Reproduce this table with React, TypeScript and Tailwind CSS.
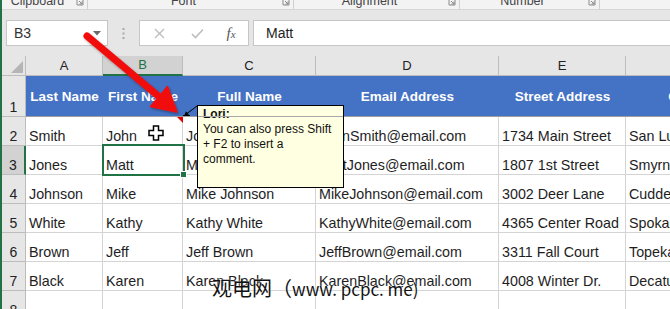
import React from "react";

const rows: string[][] = [
  ["Smith", "John", "John Smith", "JohnSmith@email.com", "1734 Main Street", "San Luis Obispo"],
  ["Jones", "Matt", "Matt Jones", "MattJones@email.com", "1807 1st Street", "Smyrna"],
  ["Johnson", "Mike", "Mike Johnson", "MikeJohnson@email.com", "3002 Deer Lane", "Cuddebackville"],
  ["White", "Kathy", "Kathy White", "KathyWhite@email.com", "4365 Center Road", "Spokane"],
  ["Brown", "Jeff", "Jeff Brown", "JeffBrown@email.com", "3311 Fall Court", "Topeka"],
  ["Black", "Karen", "Karen Black", "KarenBlack@email.com", "4008 Winter Dr.", "Decatur"],
  ["", "", "", "", "", ""],
];

const headers = ["Last Name", "First Name", "Full Name", "Email Address", "Street Address", "City"];
const letters = ["A", "B", "C", "D", "E", "F"];

function Launcher() {
  return (
    <div className="w-[14px] shrink-0 flex justify-center">
      <svg width="8" height="8" viewBox="0 0 8 8" className="-mt-[2px]">
        <path d="M1 1 V7 H7 V1" fill="none" stroke="#8a8a8a" strokeWidth="1" />
        <path d="M3 3 L6 6 M6 3.5 V6 H3.5" fill="none" stroke="#8a8a8a" strokeWidth="1" />
      </svg>
    </div>
  );
}

function Group({ label, w }: { label: string; w: string }) {
  return (
    <div className={`flex shrink-0 border-r border-[#d0d0d0] ${w}`}>
      <span className="flex-1 text-center -mt-[5px]">{label}</span>
      <Launcher />
    </div>
  );
}

export default function App() {
  return (
    <div className="relative w-[670px] h-[309px] overflow-hidden bg-white font-['Liberation_Sans',Arial,sans-serif] text-[#1e1e1e]">
      <div className="flex flex-col h-full border-l-2 border-[#217346]">
        {/* ribbon group labels */}
        <div className="flex h-[10px] shrink-0 bg-[#f3f3f3] border-b border-[#d6d6d6] overflow-hidden text-[12.5px] leading-[12px] text-[#444]">
          <Group label="Clipboard" w="w-[86px]" />
          <Group label="Font" w="w-[206px]" />
          <Group label="Alignment" w="w-[166px]" />
          <Group label="Number" w="w-[140px]" />
        </div>
        <div className="h-[10px] shrink-0 bg-[#e6e6e6]" />
        {/* formula bar */}
        <div className="flex h-[26px] shrink-0 bg-[#e6e6e6]">
          <div className="ml-[4px] w-[102px] bg-white border border-[#c6c6c6] flex items-center justify-between pl-[7px] pr-[6px] text-[14px] text-[#333]">
            <span>B3</span>
            <svg width="8" height="5" viewBox="0 0 8 5">
              <path d="M0 0 H8 L4 4.5 Z" fill="#6b6b6b" />
            </svg>
          </div>
          <div className="w-[31px] flex items-center justify-center">
            <svg width="3" height="11" viewBox="0 0 3 11">
              <rect x="0.5" y="0" width="2" height="2" fill="#a8a8a8" />
              <rect x="0.5" y="4.5" width="2" height="2" fill="#a8a8a8" />
              <rect x="0.5" y="9" width="2" height="2" fill="#a8a8a8" />
            </svg>
          </div>
          <div className="w-[110px] bg-white border border-[#c6c6c6] flex items-center">
            <div className="w-[38px] flex justify-center">
              <svg width="11" height="11" viewBox="0 0 11 11">
                <path d="M1 1 L10 10 M10 1 L1 10" stroke="#bdbdbd" strokeWidth="1.4" />
              </svg>
            </div>
            <div className="w-[38px] flex justify-center">
              <svg width="13" height="11" viewBox="0 0 13 11">
                <path d="M1 6 L4.5 9.5 L12 1.5" fill="none" stroke="#bdbdbd" strokeWidth="1.6" />
              </svg>
            </div>
            <div className="w-[30px] flex justify-center">
              <span className="font-['Liberation_Serif',serif] italic text-[15px] text-[#555] leading-none">
                f<span className="text-[11px]">x</span>
              </span>
            </div>
          </div>
          <div className="ml-[4px] flex-1 bg-white border border-r-0 border-[#c6c6c6] flex items-center pl-[12px] text-[14px] text-[#222]">
            Matt
          </div>
        </div>
        <div className="h-[10px] shrink-0 bg-[#e6e6e6]" />
        {/* sheet */}
        <div className="grid w-max grid-cols-[24px_77px_80px_133px_183px_127px_110px] grid-rows-[20px_41px_repeat(7,29px)]">
          {/* corner */}
          <div className="relative bg-[#e6e6e6] border-r border-b border-[#bcbcbc]">
            <svg width="12" height="12" viewBox="0 0 12 12" className="absolute right-[2px] bottom-[2px]">
              <path d="M12 0 V12 H0 Z" fill="#b5b5b5" />
            </svg>
          </div>
          {letters.map((l) =>
            l === "B" ? (
              <div
                key={l}
                className="flex items-center justify-center bg-[#d2d2d2] border-r border-[#bcbcbc] border-b-2 border-b-[#217346] text-[13px] text-[#217346]"
              >
                {l}
              </div>
            ) : (
              <div
                key={l}
                className="flex items-center justify-center bg-[#e6e6e6] border-r border-b border-[#bcbcbc] text-[13px] text-[#222]"
              >
                {l}
              </div>
            )
          )}
          {/* header row 1 */}
          <div className="flex items-end justify-center bg-[#e6e6e6] border-r border-b border-[#bcbcbc] text-[14px] text-[#222] leading-[17px]">
            1
          </div>
          {headers.map((h) => (
            <div
              key={h}
              className="flex items-center justify-center pt-[3px] bg-[#4472c4] border-b border-[#9e9e9e] text-white font-bold text-[13.5px] whitespace-nowrap overflow-hidden"
            >
              {h}
            </div>
          ))}
          {rows.map((r, i) => (
            <React.Fragment key={i}>
              {i === 1 ? (
                <div className="flex items-end justify-center bg-[#d2d2d2] border-r-2 border-r-[#217346] border-b border-b-[#bcbcbc] text-[14px] text-[#222] leading-[17px]">
                  {i + 2}
                </div>
              ) : (
                <div className="flex items-end justify-center bg-[#e6e6e6] border-r border-b border-[#bcbcbc] text-[14px] text-[#222] leading-[17px]">
                  {i + 2}
                </div>
              )}
              {r.map((c, j) => (
                <div
                  key={j}
                  className="flex items-end px-[3px] border-r border-b border-[#d4d4d4] text-[14.3px] leading-[17px] whitespace-nowrap overflow-hidden"
                >
                  {c}
                </div>
              ))}
            </React.Fragment>
          ))}
        </div>
      </div>

      {/* selection B3 */}
      <div className="absolute left-[102px] top-[144px] w-[83px] h-[32px] border-2 border-[#217346]">
        <div className="absolute -right-[4px] -bottom-[4px] w-[7px] h-[7px] bg-[#217346] border border-white" />
      </div>

      {/* comment box */}
      <div className="absolute left-[197px] top-[105px] w-[147px] h-[83px] bg-[#ffffe1] border border-black px-[5px] pt-[1px] font-['Liberation_Sans',Tahoma,sans-serif] text-[12px] leading-[15px] text-[#111]">
        <div className="font-bold">Lori:</div>
        <div>You can also press Shift</div>
        <div>+ F2 to insert a</div>
        <div>comment.</div>
      </div>

      {/* watermark */}
      <div className="absolute left-[212px] top-[274px] whitespace-nowrap font-['Noto_Sans_CJK_SC',sans-serif] text-[20px] leading-[28px] text-[#111] [text-shadow:0_0_2px_#ffffff]">
        观电网（<span className="text-[17px]">www. pcpc. me)</span>
      </div>

      {/* drawings */}
      <svg className="absolute left-0 top-0 pointer-events-none" width="670" height="309" viewBox="0 0 670 309">
        <defs>
          <filter id="sh" x="-20%" y="-20%" width="140%" height="140%">
            <feDropShadow dx="1" dy="1.5" stdDeviation="1" floodColor="#000" floodOpacity="0.35" />
          </filter>
        </defs>
        {/* gray line crossing comment */}
        <line x1="198" y1="116.5" x2="343" y2="116.5" stroke="#a8a8a8" strokeWidth="1" />
        {/* comment indicator */}
        <path d="M177 117 H183 V123 Z" fill="#e00000" />
        {/* connector */}
        <line x1="197" y1="106" x2="187" y2="113.5" stroke="#000" strokeWidth="1" />
        <path d="M184 116 L186 111.5 L189 114.5 Z" fill="#000" />
        <line x1="183" y1="115.5" x2="190" y2="115.5" stroke="#000" strokeWidth="1" />
        {/* red arrow */}
        <g filter="url(#sh)">
          <line x1="87" y1="36" x2="160" y2="97.5" stroke="#f20d0d" strokeWidth="7" strokeLinecap="round" />
          <path d="M177 112 L150.5 106.5 L167.5 86.5 Z" fill="#f20d0d" stroke="#f20d0d" strokeWidth="1.5" strokeLinejoin="round" />
        </g>
        {/* cursor */}
        <path
          d="M153.5 126 H158.5 V130.5 H163 V135.5 H158.5 V140 H153.5 V135.5 H149 V130.5 H153.5 Z"
          fill="#fff"
          stroke="#000"
          strokeWidth="1.5"
        />
      </svg>
    </div>
  );
}
